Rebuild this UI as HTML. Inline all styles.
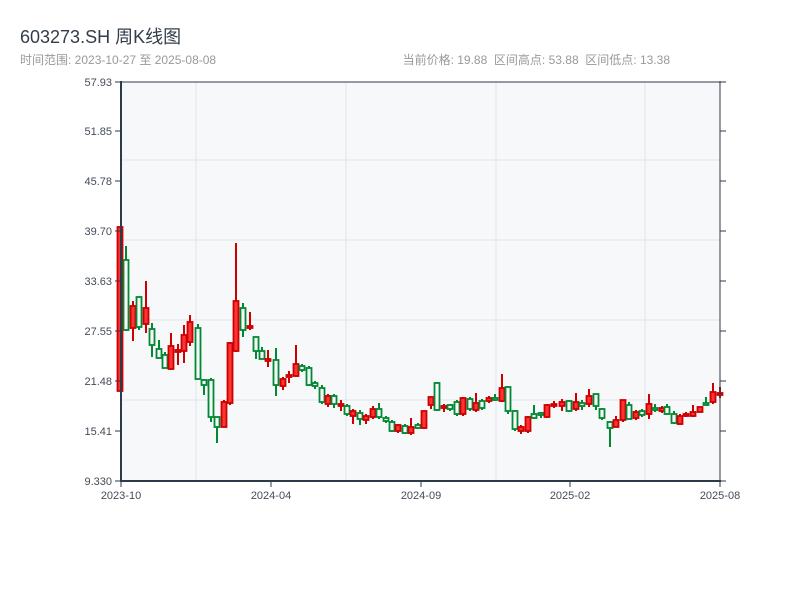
<!DOCTYPE html>
<html><head><meta charset="utf-8"><style>
body{margin:0;background:#fff;width:800px;height:600px;overflow:hidden;font-family:"Liberation Sans","Noto Sans CJK SC",sans-serif;}
.t{position:absolute;left:20px;top:23px;font-size:18px;color:#333d4a;}
.s{position:absolute;left:20px;top:51px;font-size:12px;color:#999;}
.r{position:absolute;right:130px;top:51px;font-size:12px;color:#999;}
svg{position:absolute;left:0;top:0}
</style></head><body>
<div class="t">603273.SH 周K线图</div>
<div class="s">时间范围: 2023-10-27 至 2025-08-08</div>
<div class="r">当前价格: 19.88 &nbsp;区间高点: 53.88 &nbsp;区间低点: 13.38</div>
<svg id="c" width="800" height="600" xmlns="http://www.w3.org/2000/svg" font-family="Liberation Sans, sans-serif" font-size="11">
<rect x="121" y="82" width="599" height="399" fill="#f7f8fa"/>
<g stroke="#e2e5ea" stroke-width="1">
<line x1="196" y1="82" x2="196" y2="481"/><line x1="346" y1="82" x2="346" y2="481"/><line x1="496" y1="82" x2="496" y2="481"/><line x1="645" y1="82" x2="645" y2="481"/>
<line x1="121" y1="160" x2="720" y2="160"/><line x1="121" y1="240" x2="720" y2="240"/><line x1="121" y1="320" x2="720" y2="320"/><line x1="121" y1="400" x2="720" y2="400"/>
</g>
<g id="k"></g>
<g stroke="#2d3a4a" stroke-width="2" fill="none">
<line x1="121" y1="81" x2="121" y2="482"/><line x1="120" y1="481" x2="721" y2="481"/>
<line x1="121" y1="82" x2="720" y2="82" stroke-width="1"/>
<line x1="720" y1="81" x2="720" y2="482" stroke-width="1"/>
</g>
<g id="ax" stroke="#2d3a4a" stroke-width="1"></g>
<g id="lb" fill="#444c58" text-anchor="end"></g>
<g id="xb" fill="#444c58" text-anchor="middle"></g>
</svg>
<script>
var ns="http://www.w3.org/2000/svg";
function el(p,t,a,txt){var e=document.createElementNS(ns,t);for(var k in a)e.setAttribute(k,a[k]);if(txt)e.textContent=txt;document.getElementById(p).appendChild(e);}
var ys=[82,131,181,231,281,331,381,431,481],lv=["57.93","51.85","45.78","39.70","33.63","27.55","21.48","15.41","9.330"];
for(var i=0;i<9;i++){el("ax","line",{x1:115,y1:ys[i],x2:121,y2:ys[i]});el("ax","line",{x1:720,y1:ys[i],x2:726,y2:ys[i]});el("lb","text",{x:112,y:ys[i]+4},lv[i]);}
var xs=[121,271,421,570,720],xl=["2023-10","2024-04","2024-09","2025-02","2025-08"];
for(i=0;i<5;i++){el("ax","line",{x1:xs[i],y1:481,x2:xs[i],y2:487});el("xb","text",{x:xs[i],y:499},xl[i]);}
var d=[[120,1,227,391,227,391],[126,0,260,330,246,331],[133,1,306,328,301,341],[139,0,297,327,297,330],[146,1,308,324,281,333],[152,0,329,345,323,357],[159,0,349,358,340,357],[165,0,355,368,352,368],[171,1,346,369,333,370],[178,1,350,352,344,365],[184,1,335,351,325,363],[190,1,322,342,315,346],[198,0,328,379,324,379],[204,0,380,385,379,395],[211,0,380,417,378,422],[217,0,417,427,417,443],[224,1,402,427,400,427],[230,1,343,403,342,405],[236,1,301,351,243,352],[243,0,308,330,303,337],[250,1,326,328,312,330],[256,0,337,351,337,359],[262,0,351,359,347,359],[268,1,359,361,350,367],[276,0,360,385,348,396],[283,1,379,386,377,390],[289,1,375,377,371,383],[296,1,364,376,345,377],[302,0,366,370,364,372],[309,0,368,385,366,386],[315,0,383,386,381,389],[322,0,388,402,385,404],[328,1,396,404,394,407],[334,0,396,404,394,408],[341,1,404,406,400,411],[347,0,406,414,404,416],[353,1,411,416,409,424],[360,0,413,419,410,425],[366,1,416,420,414,424],[373,1,409,417,406,419],[379,0,409,417,403,419],[386,0,418,421,416,423],[392,0,422,431,420,432],[398,1,425,431,424,433],[405,0,426,433,424,434],[411,1,427,433,418,435],[418,0,425,428,423,429],[424,1,411,428,411,429],[431,1,397,405,397,409],[437,0,383,410,382,411],[444,1,406,408,404,412],[450,0,405,409,404,411],[457,0,402,414,400,416],[463,1,398,414,397,416],[470,0,399,409,397,411],[476,1,403,410,393,412],[482,0,401,408,399,410],[489,1,398,401,396,403],[495,0,398,400,394,401],[502,1,388,401,374,402],[508,0,387,411,386,414],[515,0,411,429,410,431],[521,1,427,431,425,434],[528,1,417,431,416,433],[534,0,414,418,405,419],[541,0,413,415,412,418],[547,1,405,417,404,418],[554,1,404,406,401,408],[562,1,402,406,399,411],[569,0,401,411,400,412],[576,1,402,409,393,411],[582,0,403,406,400,410],[589,1,396,404,389,407],[596,0,394,406,394,410],[602,0,409,418,408,420],[610,0,422,428,421,447],[616,1,420,427,416,427],[623,1,400,420,400,422],[629,0,405,419,402,419],[636,1,412,418,410,420],[642,0,411,415,409,417],[649,1,404,414,394,419],[655,0,408,410,404,412],[662,1,408,411,406,413],[667,0,407,414,404,415],[674,0,414,423,411,424],[680,1,416,424,414,425],[686,1,414,416,412,417],[693,1,412,416,405,417],[700,1,407,412,407,412],[706,0,403,405,397,406],[713,1,392,402,383,404],[720,1,393,395,387,398]];
d.forEach(function(c){var col=c[1]?"#cc0000":"#008833";
el("k","line",{x1:c[0],y1:c[4],x2:c[0],y2:c[5],stroke:col,"stroke-width":2});
var h=Math.max(c[3]-c[2],2);
el("k","rect",{x:c[0]-2.5,y:c[2],width:5,height:h,fill:c[1]?"#ff3333":"#f7f8fa",stroke:col,"stroke-width":1.8});});
</script>
</body></html>
